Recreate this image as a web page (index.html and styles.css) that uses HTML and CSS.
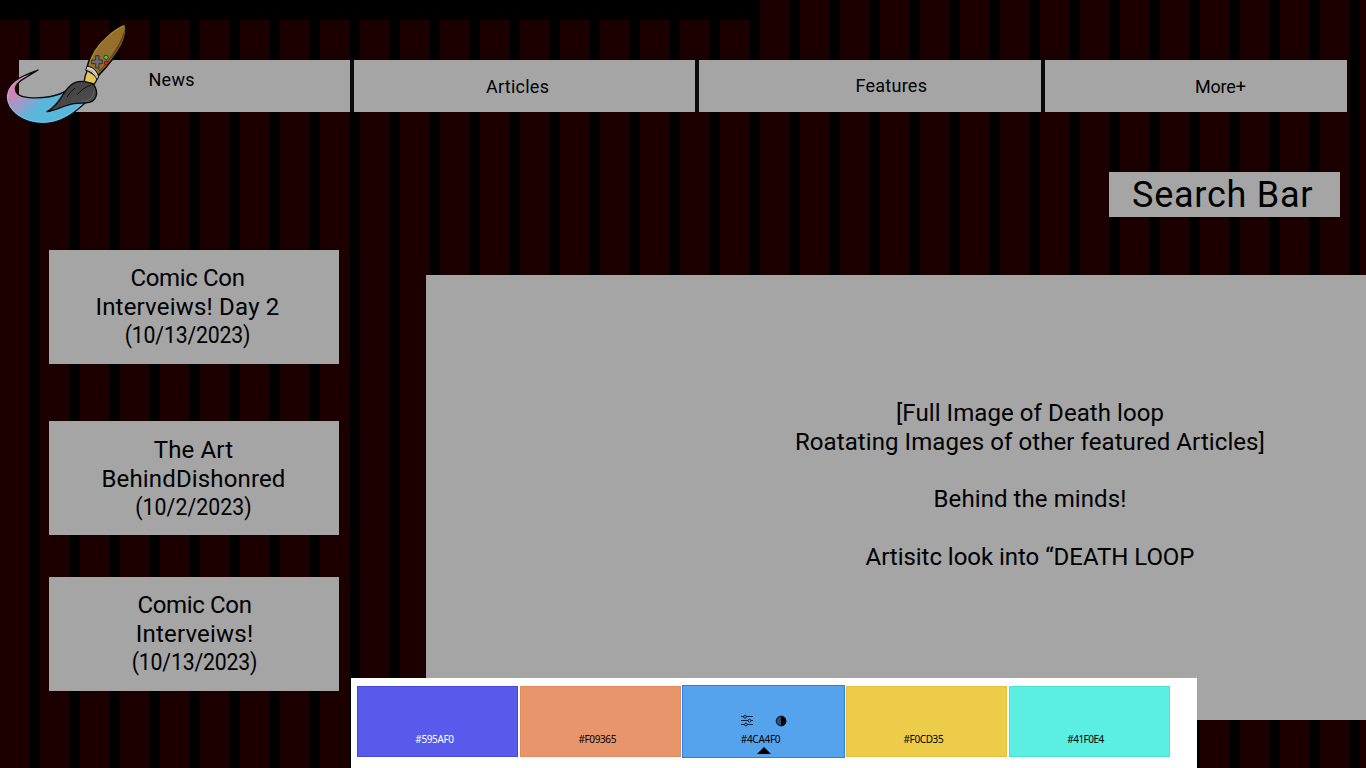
FILE: index.html
```html
<!DOCTYPE html>
<html lang="en">
<head>
<meta charset="utf-8">
<title>Gaming News</title>
<link rel="stylesheet" href="styles.css">
</head>
<body>
<div class="page">
  <div class="top-strip"></div>
  <nav class="nav">
    <a class="nav-item news">News</a>
    <a class="nav-item articles">Articles</a>
    <a class="nav-item features">Features</a>
    <a class="nav-item more">More+</a>
  </nav>
  <svg class="logo" viewBox="0 0 420 345" aria-hidden="true">
    <defs>
      <linearGradient id="paint" gradientUnits="userSpaceOnUse" x1="35" y1="210" x2="110" y2="285">
        <stop offset="0" stop-color="#d97fb5"/>
        <stop offset=".25" stop-color="#c589bb"/>
        <stop offset="1" stop-color="#58b7db"/>
      </linearGradient>
      <linearGradient id="bristle" x1="0" y1="0" x2="1" y2="1">
        <stop offset="0" stop-color="#3f3f3f"/>
        <stop offset="1" stop-color="#505050"/>
      </linearGradient>
    </defs>
    <path d="M114 165C70 183 20 198 19 246C20 288 66 325 132 325C188 324 226 291 262 258L204 224C174 245 126 252 81 247C57 244 46 237 46 221C48 201 74 190 114 165Z" fill="url(#paint)" stroke="#0b0b0b" stroke-width="4" stroke-linejoin="round"/>
    <path d="M22 240C21 286 67 322 132 322C182 321 219 292 245 268" fill="none" stroke="#6bd4f7" stroke-width="2.5"/>
    <path d="M23 250C23 215 45 197 79 183" fill="none" stroke="#f0a4d0" stroke-width="2"/>
    <path d="M252 202C254 186 256 178 262 166L294 187C290 196 288 201 283 207Z" fill="#e6c455" stroke="#111" stroke-width="4"/>
    <path d="M375 27C340 38 300 77 282 104C272 121 266 137 261 157C276 157 289 169 295 182C320 156 348 121 365 91C376 69 381 43 375 27Z" fill="#94702c" stroke="#0c0a06" stroke-width="5" stroke-linejoin="round"/>
    <path d="M374 39C376 65 360 96 339 123L300 170L294 163C325 139 356 85 374 39Z" fill="#704019"/>
    <path d="M370 33C367 65 341 109 298 161" fill="none" stroke="#94702c" stroke-width="9"/>
    <path d="M371 32C337 47 302 83 285 109C277 123 271 137 267 151" fill="none" stroke="#bc8b34" stroke-width="2.5"/>
    <path d="M261 154C278 155 292 168 296 186L291 194C284 179 273 169 257 166Z" fill="#d5d5d8" stroke="#111" stroke-width="3"/>
    <path d="M260 163C276 166 287 174 293 190" fill="none" stroke="#77777c" stroke-width="1.5"/>
    <path d="M206 217C221 198 248 195 271 204C291 211 294 238 284 252C272 268 248 262 222 266C193 271 167 286 141 290C178 270 182 242 206 217Z" fill="url(#bristle)" stroke="#0c0c0c" stroke-width="4" stroke-linejoin="round"/>
    <path d="M202 245Q210 230 224 220M233 238Q246 220 271 211" fill="none" stroke="#111" stroke-width="3" stroke-linecap="round"/>
    <path d="M281 227C282 250 268 259 242 258" fill="none" stroke="#727272" stroke-width="2"/>
    <path d="M287 122h10v13h10v11h-10v13h-10v-13h-12v-11h12z" fill="#6c6c70" stroke="#2b2824" stroke-width="2.5" stroke-linejoin="round"/>
    <circle cx="318" cy="127" r="6.5" fill="#35cf68" stroke="#173015" stroke-width="2.5"/>
    <circle cx="319" cy="144" r="6" fill="#ef2029" stroke="#4b1111" stroke-width="2.5"/>
  </svg>
  <div class="search">Search Bar</div>
  <main class="content">
    <aside class="sidebar">
      <article class="card day-two">
        <p>Comic Con</p>
        <p class="wide">Interveiws! Day 2</p>
        <p class="date">(10/13/2023)</p>
      </article>
      <article class="card dishonored">
        <p class="plain">The Art</p>
        <p class="plain">BehindDishonred</p>
        <p class="date">(10/2/2023)</p>
      </article>
      <article class="card day-one">
        <p>Comic Con</p>
        <p class="wide">Interveiws!</p>
        <p class="date">(10/13/2023)</p>
      </article>
    </aside>
    <section class="feature">
      <p>[Full Image of Death loop</p>
      <p>Roatating Images of other featured Articles]</p>
      <p class="spaced">Behind the minds!</p>
      <p class="spaced last">Artisitc look into “DEATH LOOP</p>
    </section>
  </main>
  <div class="palette">
    <div class="swatch indigo"><span>#595AF0</span></div>
    <div class="swatch orange"><span>#F09365</span></div>
    <div class="swatch blue">
      <div class="tools">
        <svg class="tool" viewBox="0 0 12 12" fill="none" stroke="#0b2238"><path d="M0 1.500h2.500M5.500 1.500h6.500M0 5.500h7M10 5.500h2M0 9.500h3.500M6.500 9.500h5.500"/><circle cx="4" cy="1.800" r="1.400"/><circle cx="8.500" cy="5.600" r="1.400"/><circle cx="5" cy="9.500" r="1.400"/></svg>
        <svg class="tool" viewBox="0 0 12 12"><circle cx="6" cy="6" r="4.800" fill="#27517b" stroke="#07121e"/><path d="M6 .7a5.300 5.300 0 0 1 0 10.600z" fill="#000"/></svg>
      </div>
      <span>#4CA4F0</span>
      <i class="pointer"></i>
    </div>
    <div class="swatch yellow"><span>#F0CD35</span></div>
    <div class="swatch aqua"><span>#41F0E4</span></div>
  </div>
</div>
</body>
</html>
```
FILE: styles.css
```css
* { box-sizing: border-box; }

body {
  margin: 0;
  overflow: hidden;
  background: #000;
  color: #000;
  font-family: Roboto, "Liberation Sans", sans-serif;
}

p { margin: 0; }

.page {
  position: relative;
  width: 1366px;
  height: 768px;
  overflow: hidden;
  background: repeating-linear-gradient(90deg, #1c0000 0 30px, #000 30px 40px);
}

.top-strip {
  width: 760px;
  height: 20px;
  background: #000;
}

.nav {
  display: grid;
  grid-template-columns: 331px 341px 342px 302px;
  gap: 4px;
  width: 1328px;
  height: 52px;
  margin: 40px 0 0 19px;
  background: #0a0a0a;
}

.nav-item {
  background: #a5a5a5;
  font-size: 18px;
  line-height: 20px;
  letter-spacing: 0.25px;
}

.news { padding: 10px 0 0 129.5px; }
.articles { padding: 17px 0 0 132px; }
.features { padding: 16px 0 0 156.5px; }
.more { padding: 17px 0 0 150px; letter-spacing: -0.2px; }

.logo {
  position: absolute;
  left: 0;
  top: 15px;
  width: 140px;
  height: 115px;
}

.search {
  width: 231px;
  height: 45px;
  margin: 60px 0 0 1109px;
  padding-left: 23px;
  background: #a5a5a5;
  font-size: 36px;
  line-height: 46px;
  letter-spacing: 0.75px;
  white-space: nowrap;
}

.content {
  display: flex;
  align-items: flex-start;
  gap: 87px;
  margin: 33px 0 0 49px;
}

.sidebar { width: 290px; }

.card {
  height: 114px;
  padding-top: 14.4px;
  background: #a5a5a5;
  font-size: 24px;
  line-height: 28.8px;
  letter-spacing: -0.35px;
  text-align: center;
}

.day-two { padding-right: 13px; }
.dishonored { margin-top: 57px; padding-top: 15.4px; padding-right: 1px; }
.day-one { margin-top: 42px; padding-left: 1px; }
.wide { letter-spacing: 0.2px; }
.plain { letter-spacing: 0.15px; }
.date { margin-top: -1px; letter-spacing: -0.2px; transform: scaleX(0.885); }
.dishonored .date { letter-spacing: 0.1px; }

.feature {
  width: 940px;
  height: 445px;
  margin-top: 25px;
  padding: 123.8px 0 0 268px;
  background: #a5a5a5;
  font-size: 24px;
  line-height: 28.8px;
  letter-spacing: 0.08px;
  text-align: center;
}

.spaced { margin-top: 28.9px; }
.last { letter-spacing: -0.04px; }

.palette {
  position: absolute;
  left: 351px;
  top: 678px;
  display: grid;
  grid-template-columns: 161px 161px 163px 161px 161px;
  column-gap: 1.5px;
  align-items: start;
  width: 846px;
  height: 90px;
  padding: 8px 6px;
  background: #fff;
}

.swatch {
  display: flex;
  flex-direction: column;
  align-items: center;
  justify-content: flex-end;
  height: 71px;
  padding-bottom: 11px;
  border: 1px solid;
  font-family: "Noto Sans", sans-serif;
  font-size: 10px;
  line-height: 12px;
  letter-spacing: -0.38px;
}

.swatch span { margin-right: 6px; }

.indigo { background: #575aea; border-color: #4648dc; color: #fff; }
.orange { background: #e9956b; border-color: #e38a5d; margin-left: 0.5px; }
.blue {
  height: 73px;
  margin-top: -1px;
  padding-bottom: 12px;
  background: #55a2ed;
  border-color: #2582e8;
  letter-spacing: -0.28px;
}
.yellow { background: #edcc4a; border-color: #e9bd3d; margin: 0 0.6px 0 -0.6px; }
.aqua { background: #5beee2; border-color: #4ce3d5; letter-spacing: -0.5px; }
.aqua span { margin-right: 8px; }

.tools {
  display: flex;
  gap: 22px;
  margin: 0 0 6px;
}

.tool { width: 12px; height: 12px; }

.pointer {
  height: 7px;
  margin-bottom: -9px;
  margin-top: 2px;
  border: solid transparent;
  border-width: 0 7.5px 7px;
  border-bottom-color: #000;
}
```
